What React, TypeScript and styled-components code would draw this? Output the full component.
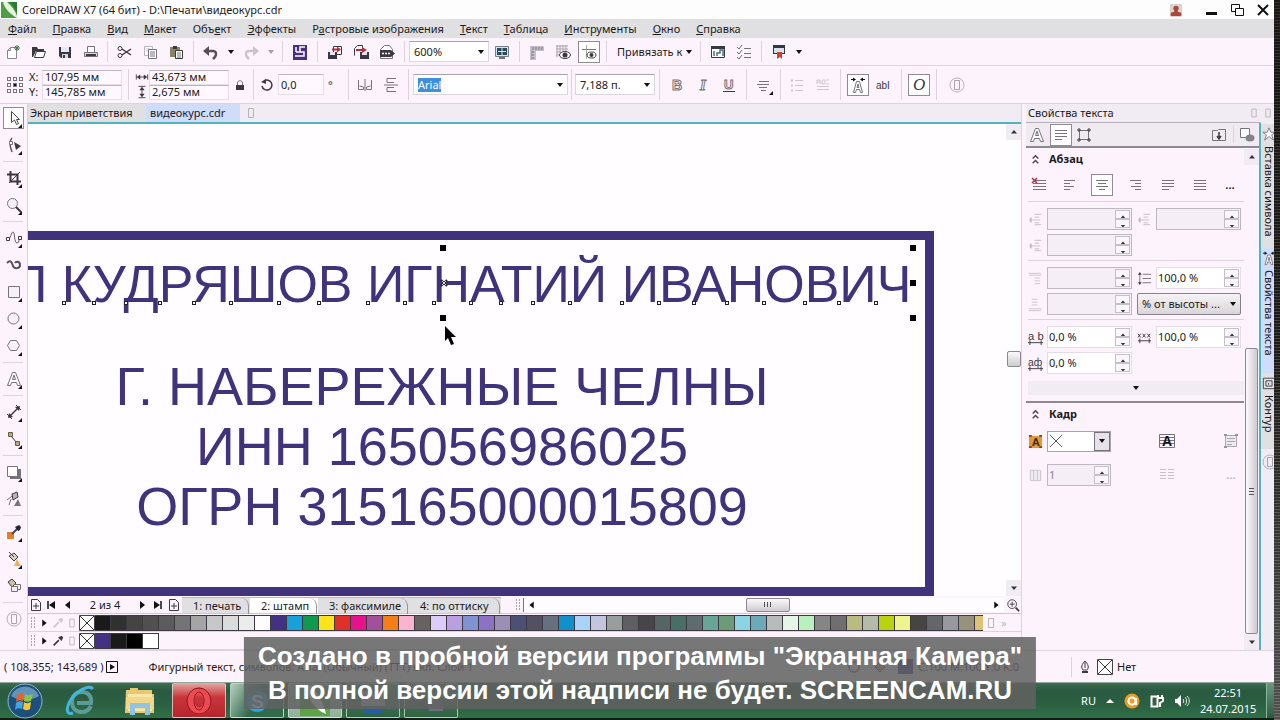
import React from "react";
import styled, { createGlobalStyle, css } from "styled-components";

const color = {
  ink: "#1d1a20",
  panel: "#fdf3fd",
  bar: "#f1ecf3",
  menu: "#e0dfe1",
  line: "#ddd3dd",
  teal: "#52b2bd",
  active: "#cfdcfa",
  stamp: "#41327c",
};

const GlobalStyle = createGlobalStyle`
  *, *::before, *::after { box-sizing: border-box; }
  body {
    margin: 0;
    font: 11px/16px "Noto Sans", "Open Sans", sans-serif;
    color: ${color.ink};
  }
  button, input, select { font: inherit; color: inherit; margin: 0; padding: 0; }
  button { background: none; border: 0; }
  svg { display: block; flex: none; overflow: visible; }
`;

/* ---------- icons ---------- */

const dark = "#3c383f";
const mid = "#77727b";
const s = (d: string, stroke = dark, width = 1, fill = "none") => (
  <path d={d} stroke={stroke} strokeWidth={width} fill={fill} />
);
const f = (d: string, fill = dark) => <path d={d} fill={fill} />;

const glyphs: Record<string, React.ReactNode> = {
  new: <>{s("M2.5 14.5v-8l3-3h6v11z", "#8b8590", 1, "#fff")}{s("M2.5 6.5h3v-3", "#8b8590")}{s("M12 1v6M9 4h6M10 2l4 4M14 2l-4 4", "#3d7a4a")}</>,
  open: <>{f("M1 3h5l1 2h6v2H5l-3 6H1z")}{s("M3.5 13.5l2-6h9l-2 6z", dark, 1, "#fff")}</>,
  save: <>{f("M2 3h12v11H4l-2-2z", "#3a3745")}{f("M4 3h8v5H4z", "#e8e6ee")}{f("M5 10h6v4H5z", "#d8d6de")}{f("M6 11h2v3H6z", "#3a3745")}</>,
  print: <>{s("M4.500 8V2.500h7V8", mid, 1, "#fff")}{f("M1 8h14v5H1z", "#dcd8de")}{s("M1.500 8.500h13v4h-13z", mid)}{f("M3 10h10v2H3z")}</>,
  cut: <>{s("M6 5l9 6M6 11l9-6", dark, 1.5)}<circle cx="4" cy="4.500" r="2" fill="none" stroke={dark} /><circle cx="4" cy="11.500" r="2" fill="none" stroke={dark} /></>,
  copy: <>{s("M2.500 2.500h8v9h-8z", "#b9b4bc", 1, "#fff")}{s("M4 5h5M4 7h5", "#c5c0c8")}{s("M6.500 5.500h8v9h-8z", mid, 1, "#fff")}{s("M8 8h5M8 10h5M8 12h5", mid)}</>,
  paste: <>{f("M2 3h10v10H2z", "#8a8465")}{f("M5 2h4v3H5z", dark)}{s("M7.500 6.500h7v8h-7z", dark, 1, "#fff")}{s("M9 9h4M9 11h4M9 13h4", mid)}</>,
  undo: <>{s("M4 7h6c3 0 4 3 2 6l-2 2", "#55505a", 2.5)}{f("M0 7l6-5v10z", "#55505a")}</>,
  redo: <>{s("M12 7H6c-3 0-4 3-2 6l2 2", "#c9c3cb", 2.5)}{f("M16 7l-6-5v10z", "#c9c3cb")}</>,
  connect: <>{f("M1 1h14v15H1z", "#4a2f7d")}{s("M13 3H8v5h4v4H3M4 3v5M4 8h4", "#fff", 1.5)}</>,
  import: <>{s("M6.500 9V2.500h8v8H10", dark)}{f("M1 8h9v7H1z", "#3a3745")}{f("M3 8h5v3H3z", "#e8e6ee")}{s("M5 5.500h6", "#b3313c", 2)}{f("M10 2.500l4 3-4 3z", "#b3313c")}</>,
  export: <>{s("M1.500 11.500V4.500l3-3h5V8", dark)}{f("M7 8h9v7H7z", "#3a3745")}{f("M9 8h5v3H9z", "#e8e6ee")}{s("M3 6h7", "#b3313c", 2)}{f("M9 3l5 3-5 3z", "#b3313c")}</>,
  publish: <>{s("M1.500 14.500v-9l4-4h5l3 4v9z", mid, 1, "#fff")}{f("M1 6h11l4 3.500-4 3.500H1z")}{s("M3 9.500h2M6 9.500h2M9 9.500h2", "#fff", 1.5)}</>,
  fullscreen: <>{s("M1.500 2.500h13v10h-13z", "#6f7f86", 1, "#cfe6ee")}{f("M3 4h10v7H3z", "#2c4a5b")}{s("M8 4v7M4 7.500h8", "#cfe6ee")}{f("M5 13h6v2H5z", mid)}</>,
  ruler: <>{f("M1 2h14v5H7v9H1z", "#c4c0ca")}{s("M4 3v3M7 3v3M10 3v3M13 3v3M2 8h3M2 11h3M2 14h3", mid)}</>,
  grid: <>{s("M1 2h12M1 5h12M1 8h5M1 11h3", "#aaa4ae", 1)}{s("M2 1v12M5 1v8M8 1v6M11 1v6", "#aaa4ae", 1)}<ellipse cx="10" cy="11" rx="5.500" ry="3.500" fill="#fff" stroke={dark} /><circle cx="10" cy="11" r="2.500" fill={dark} /></>,
  guides: <>{s("M1 5.500h14", mid)}{s("M5.500 1v14", "#aaa4ae")}<ellipse cx="10.500" cy="11" rx="4.500" ry="3" fill="#fff" stroke={dark} /><circle cx="10.500" cy="11" r="2" fill={dark} /></>,
  options: <>{s("M1.500 2.500h13v11h-13z", dark, 1, "#fff")}{f("M1 2h14v3H1z")}{s("M4 12V7M7 12V9h3V6h3v6", "#4d6d8a", 1.500)}</>,
  checklist: <>{s("M1 3l2 2 3-4M1 8l2 2 3-4M1 13l2 2 3-4", "#5b7a52")}{s("M8 4.500h7M8 9.500h7M8 13.500h7", mid)}</>,
  launch: <>{f("M2 1h12v9H2z", "#2e3746")}{f("M3 4h10v5H3z", "#d5e0e8")}{f("M6 8h5v7l-2-2-3 2z", "#d0402d")}</>,
  origin: <>{[1, 7, 13].map((x) => [1, 7, 13].map((y) => <rect key={x + "-" + y} x={x - 0.5} y={y - 0.5} width="3" height="3" fill={x === 7 && y === 7 ? "#111" : "#fff"} stroke="#77727b" />))}</>,
  width: <>{s("M1.500 5v6M14.500 5v6M3 8h10")}{f("M2 8l4-3v6zM14 8l-4-3v6z")}</>,
  height: <>{s("M4 1.500h8M4 14.500h8M8 3v10")}{f("M8 2l3 4H5zM8 14l3-4H5z")}</>,
  lock: <>{s("M5.500 8V6c0-3 5-3 5 0v2", mid)}{f("M4 8h8v5H4z")}</>,
  rotate: <>{s("M5 4a5 5 0 1 1-2 5", dark, 1.500)}{f("M2 5l5-3v5z")}</>,
  mirrorH: <>{s("M1.500 3v9.500h5V10l-4-1M14.500 3v9.500h-5V10l4-1", mid)}{s("M8 2v12", mid)}</>,
  mirrorV: <>{s("M13 1.500H4v4h7M13 14.500H4v-4h7", mid)}{s("M1 8h14", mid)}</>,
  alignMenu: <>{s("M3 4.500h10M1 7.500h12M3 10.500h8M5 13.500h5", mid)}</>,
  bullets: <>{s("M6 3.500h8M6 8.500h8M6 13.500h8", "#cdc6cf")}{s("M2 3.500h2M2 8.500h2M2 13.500h2", "#cdc6cf", 2)}</>,
  dropCap: <>{s("M2 7V3h3v4M2 5h3M7 3h3v4H7zM11 3h3M11 7h3M2 9.500h12M2 12.500h12", "#cdc6cf")}</>,
  holder: <><circle cx="8" cy="8" r="7" fill="none" stroke="#b5afb8" />{s("M5.500 3.500h5v9h-5z", "#a9a3ab")}</>,
  slot: s("M5.500 3.500h5v9h-5z", "#b9b2bb"),
  pick: <>{s("M5.500 1.500v11l3-2.500 2 4.500 2-1-2-4h3z", "#4a454e", 1, "#fff")}</>,
  shape: <>{s("M6 1C3 4 4 10 6 15", "#5d5861", 1.500)}{s("M3.500 4.500h3v3h-3z", mid, 1, "#fff")}{f("M8 5l7 4-5 4z")}</>,
  crop: <>{s("M4.500 1v10.500H15M1 4.500h10.500V15", dark, 2)}{s("M3 13L14 2")}</>,
  zoom: <><circle cx="6.500" cy="6.500" r="5" fill="#f5eff6" stroke={mid} />{s("M10 10l5 5", dark, 2)}</>,
  freehand: <>{s("M2 9c3 0 3-7 5-7s1 11 4 11 1-5 4-5", "#5d5861")}{s("M.500 7.500h3v3h-3zM12.500 6.500h3v3h-3z", dark, 1, "#fff")}</>,
  artistic: <>{s("M1 6c4-4 5 0 6 3s7 3 7-1-4-4-5-2", "#55505a", 2)}</>,
  rect: <>{s("M2.500 2.500h11v11h-11z", mid, 1, "#f5f1f6")}</>,
  ellipse: <circle cx="7.500" cy="7.500" r="5.500" fill="#f5f1f6" stroke={mid} />,
  polygon: <>{s("M1.500 7.500l3-5h6l3 5-3 5h-6z", mid, 1, "#f5f1f6")}</>,
  text: <>{s("M1.500 14.500l5-13h3l5 13h-3l-1-3h-5l-1 3zM6.500 8.500h3L8 4z", mid, 1, "#fff")}</>,
  dimension: <>{s("M3 13L13 3", dark, 1.500)}{s("M1 10l5 5M10 1l5 5")}{f("M2 14l1-5 4 4zM14 2l-1 5-4-4z")}</>,
  connector: <>{s("M5 5l6 7")}{s("M2.500 1.500h4v4h-4zM9.500 10.500h4v4h-4z", "#6b5d44", 1, "#b8a983")}</>,
  shadow: <>{f("M4 5h11v10H4z", "#77727b")}{s("M1.500 2.500h10v10h-10z", mid, 1, "#fff")}</>,
  transparency: <>{s("M1 9l9-7M5 8l-2 6", mid)}{s("M6 3l5-2 1 5-5 3z", dark, 1, "#b9b3bd")}{f("M12 8l3 7H8z", "#77727b")}</>,
  eyedropper: <>{f("M1 8h7v7H1z", "#e0822a")}{s("M6 10l6-6", "#46465e", 2)}{f("M9 3l2-1 2-1 2 2-1 3-2 1z", "#25243a")}</>,
  fill: <>{s("M3 5l5-3 4 4-4 4z", dark, 1, "#d9d2c4")}{s("M3 1l5 5")}{f("M11 8l4 7H8z", "#eab251")}</>,
  smartFill: <>{s("M2 4l4-3 4 4-4 4z", dark, 1, "#c9c2a4")}{s("M5.500 8.500h6v5h-6zM8.500 6.500h6v5h-3", mid, 1, "#f1edf2")}</>,
  frame: <>{s("M3.500 3.500h9v9h-9z", mid)}{s("M1 3h4M3 1v4M11 3h4M13 1v4M1 13h4M3 11v4M11 13h4M13 11v4", dark)}</>,
  paragraph: s("M2 3.500h12M2 6.500h12M2 9.500h12M2 12.500h7", mid),
  dock: <>{s("M1.500 3.500h5l1-1h7v11h-13z", mid)}{s("M8 5v6M6 9l2 3 2-3", dark, 1.500)}</>,
  overlap: <>{s("M1.500 1.500h9v9h-9z", mid, 1, "#fff")}<ellipse cx="11" cy="11" rx="4.500" ry="3.500" fill="#858089" /></>,
  chevrons: s("M5 7l3-3 3 3M5 12l3-3 3 3", "#4a454e", 1.500),
  noAlign: <>{s("M4 3.500h11M2 6.500h13M2 9.500h13M2 12.500h13", mid)}{s("M1 1l5 5M6 1l-5 5", "#b93342", 1.500)}</>,
  left: s("M2 3.500h11M2 6.500h6M2 9.500h10M2 12.500h6", mid),
  center: s("M2 3.500h12M4 6.500h8M2 9.500h12M5 12.500h6", mid),
  right: s("M3 3.500h11M8 6.500h6M4 9.500h10M8 12.500h6", mid),
  justify: s("M2 3.500h12M2 6.500h12M2 9.500h12M2 12.500h7", mid),
  force: s("M2 3.500h12M2 6.500h12M2 9.500h12M2 12.500h12", mid),
  indent: <>{s("M7 2.500h7M7 5.500h5M1 8.500h12M7 11.500h5M7 13.500h7", "#c5bec8")}{s("M3 6v5", "#c5bec8", 2)}</>,
  space: <>{s("M1 2.500h13M1 4.500h13M7 7.500h6M7 10.500h6M7 13.500h6", "#cbc4cd")}</>,
  spaceAfter: <>{s("M4 2.500h6M4 5.500h6M4 8.500h6M1 12.500h13M1 14.500h13", "#cbc4cd")}</>,
  lead: <>{s("M3 3v10M6 3.500h9M6 8h9M6 12.500h9", mid)}{f("M3 1l2 3H1zM3 15l2-3H1z", dark)}</>,
  ab: <><text x="0" y="11" fontFamily="Liberation Sans" fontSize="12" fill={dark}>a b</text>{s("M0 13.500h16M2 11v5M14 11v5")}</>,
  abLang: <><text x="0" y="11" fontFamily="Liberation Sans" fontSize="11" fill={dark}>aф</text>{s("M0 13.500h16M2 11v5M14 11v5")}</>,
  xxx: <>{s("M1 4l3 4M4 4L1 8M6 4l3 4M9 4L6 8M11 4l3 4M14 4l-3 4M1 11.500h14M3 9v5M13 9v5")}</>,
  frameFill: <>{f("M1 2h14v13H1z", "#dd9a37")}{s("M1 2h3M12 2h3M1 14h3M12 14h3", "#6b4a1c", 2)}<text x="4" y="13" fontFamily="Liberation Sans" fontWeight="700" fontSize="12" fill="#3b2b18">A</text></>,
  frameA: <>{s("M.500 1.500h15v13H.500zM1 4.500h14M1 7.500h14M1 10.500h14", mid, 1)}<text x="3" y="13" fontFamily="Liberation Sans" fontWeight="700" fontSize="14" fill="#111">A</text></>,
  frameText: <>{s("M2.500 2.500h11v11h-11zM4 5.500h8M4 8.500h8M4 11.500h5", "#aaa4ad", 1, "#eee9ef")}{s("M1 2h3M12 2h3M1 14h3", "#99939c", 2)}</>,
  columns: <>{s("M2.500 2.500h11v11h-11zM6 3v10M10 3v10", "#c8c1ca", 1, "#f1ebf2")}</>,
  columnText: s("M1 2.500h6M1 5.500h6M1 8.500h6M1 11.500h6M9 2.500h6M9 5.500h6M9 8.500h6M9 11.500h6", "#c8c1ca"),
  star: <>{s("M8 1l2 5h5l-4 3 2 6-5-4-5 4 2-6-4-3h5z", mid, 1, "#fff")}</>,
  outline: <>{s("M1.500 2.500h13v12h-13zM4.500 5.500h7v6h-7zM7.500 8v2", dark)}</>,
  addPage: <>{s("M3.500 2.500h6l3 3v8h-9zM8 6v6M5 9h6", dark)}</>,
  first: <>{s("M4 4v8", "#111", 1.500)}{f("M11 4v8L5 8z", "#111")}</>,
  prev: f("M10 4v8L5 8z", "#111"),
  next: f("M6 4v8l5-4z", "#111"),
  last: <>{s("M11 4v8", "#111", 1.500)}{f("M4 4v8l6-4z", "#111")}</>,
  up: f("M5 9.500h6L8 6z", "#333"),
  down: f("M5 6.500h6L8 10z", "#333"),
  zoomFit: <><circle cx="7" cy="7" r="5" fill="none" stroke={dark} />{s("M11 11l4 4", dark, 2)}{s("M7 4v6M4 7h6")}</>,
  dropperOff: <>{s("M3 13l6-6", "#cdc7cf", 2)}{f("M8 4l4-2 2 2-2 4z", "#cdc7cf")}</>,
  dropper: <>{s("M3 13l6-6", dark, 2)}{f("M8 4l4-2 2 2-2 4z")}</>,
  nib: <>{s("M8 2C3 7 5 10 6 11h4c1-1 3-4-2-9zM8 3v6", dark)}{f("M5 12h6v2H5z")}</>,
  fillTool: <>{s("M3 8l5-5 5 5-5 5z", dark, 1, "#c9a86a")}</>,
  disc: <circle cx="8" cy="8" r="5" fill="none" stroke={mid} strokeWidth="2" />,
  runBox: <>{s("M2.500 2.500h11v11h-11z", "#111", 1)}{f("M6 5v6l5-3z", "#111")}</>,
  none: <>{s("M.500.500h15v15H.500z", "#444", 1, "#fff")}{s("M1 1l14 14M15 1L1 15", "#333")}</>,
  cross: s("M1 1l14 14M15 1L1 15", "#444"),
  person: <>{f("M1 1h14v14H1z", "#d9d3cf")}<circle cx="8" cy="6" r="3" fill="#a8483a" />{f("M6 8h4v2l4 1v4H2v-4l4-1z", "#a8483a")}</>,
  minimize: f("M3 10h11v3H3z", "#111"),
  restore: <>{s("M2.500 2.500h8v7h-8z", "#111", 1)}{s("M6.500 6.500h8v7h-8z", "#111", 1, "#fff")}</>,
  close: s("M3 3l10 10M13 3L3 13", "#111", 2),
  boldLetter: <text x="3" y="13" fontFamily="Liberation Sans" fontWeight="700" fontSize="14" fill="#fff" stroke="#77727b">B</text>,
  italicLetter: <text x="5" y="13" fontFamily="Liberation Serif" fontStyle="italic" fontWeight="700" fontSize="15" fill="#fff" stroke="#77727b">I</text>,
  underLetter: <><text x="3" y="12" fontFamily="Liberation Sans" fontWeight="700" fontSize="13" fill="#fff" stroke="#77727b">U</text>{s("M2 14.500h12", dark)}</>,
  textMode: <>{s("M3.500 15.500l3-11h3l3 11h-2l-1-3h-3l-1 3zM7 10.500h2L8 7z", mid, 1, "#fff")}{s("M1 2.500h3M12 2.500h3", "#111")}{f("M3 0.500l3 2-3 2zM13 0.500l-3 2 3 2z", "#111")}</>,
  editText: <text x="0" y="12" fontFamily="Liberation Sans" fontSize="10" fill={dark}>abI</text>,
  openType: <text x="2" y="13" fontFamily="Liberation Serif" fontStyle="italic" fontSize="17" fill={dark}>O</text>,
};

const Icon = ({ name, size = 16 }: { name: string; size?: number }) => (
  <svg width={size} height={size} viewBox="0 0 16 16" aria-hidden="true">{glyphs[name]}</svg>
);

const Logo = () => (
  <svg width="16" height="16" viewBox="0 0 16 16" aria-hidden="true">
    <path d="M0 0h16v16H0z" fill="#4f9d45" />
    <path d="M2 0h4c4 4 8 8 10 14v2C9 12 4 7 2 0z" fill="#e6f4df" />
    <path d="M8 0c4 3 6 7 8 12V0z" fill="#2c7a37" />
  </svg>
);

/* ---------- shared parts ---------- */

const Screen = styled.div`
  position: relative;
  display: flex;
  min-height: 100vh;
  overflow: hidden;
`;

const Desktop = styled.div`
  flex: 1;
  min-width: 0;
  display: flex;
  flex-direction: column;
  background: ${color.panel};
`;

const Wallpaper = styled.div`
  flex: 0 0 6px;
  background:
    linear-gradient(rgba(20, 20, 18, 0.7), rgba(20, 20, 18, 0.5) 50%, rgba(110, 110, 110, 0.6)),
    repeating-linear-gradient(#25231f 0 2px, #7a7770 2px 3px);
`;

const TitleBar = styled.header`
  display: flex;
  align-items: center;
  gap: 5px;
  height: 19px;
  padding-left: 1px;
  background: #fefdfe;
`;

const WindowButtons = styled.div`
  display: flex;
  gap: 10px;
  margin-left: auto;
  padding-right: 3px;
  > :first-child { margin-right: 10px; }
`;

const MenuBar = styled.nav`
  display: flex;
  align-items: center;
  gap: 16px;
  height: 19px;
  padding-left: 8px;
  background: ${color.menu};
`;

const MenuItem = styled.button`
  white-space: nowrap;
  line-height: 18px;
`;

const Toolbar = styled.div<{ $tall?: boolean }>`
  display: flex;
  align-items: center;
  height: ${(p) => (p.$tall ? 38 : 28)}px;
  border-bottom: 1px solid ${color.line};
`;

const Divider = styled.span<{ $w?: number }>`
  flex: none;
  align-self: stretch;
  width: 1px;
  margin: 3px ${(p) => p.$w ?? 4}px;
  background: ${color.line};
`;

const ToolButton = styled.button<{ $on?: boolean; $flyout?: boolean; $w?: number }>`
  position: relative;
  flex: none;
  display: grid;
  place-items: center;
  width: ${(p) => p.$w ?? 26}px;
  height: 26px;
  ${(p) => p.$on && css`
    &::before {
      content: "";
      position: absolute;
      inset: 2px;
      border: 1px solid #8f8a93;
      background: #fff;
    }
    svg { position: relative; }
  `}
  ${(p) => p.$flyout && css`
    &::after {
      content: "";
      position: absolute;
      right: 4px;
      bottom: 3px;
      border: 2px solid;
      border-color: transparent #111 #111 transparent;
    }
  `}
`;

const Caret = styled.button<{ $w?: number; $dim?: boolean }>`
  flex: none;
  display: grid;
  place-items: center;
  width: ${(p) => p.$w ?? 14}px;
  height: 18px;
  &::before {
    content: "";
    border: 3px solid transparent;
    border-top: 4px solid ${(p) => (p.$dim ? "#a59fa7" : "#111")};
    border-bottom: 0;
  }
`;

const Combo = styled.div<{ $w: number }>`
  flex: none;
  display: flex;
  align-items: center;
  justify-content: space-between;
  width: ${(p) => p.$w}px;
  height: 21px;
  padding-left: 4px;
  border: 1px solid #ddd6df;
  border-top-color: #aaa3ad;
  background: #fff;
`;

const ComboInput = styled.input<{ $marked?: boolean }>`
  width: ${(p) => (p.$marked ? 23 : 48)}px;
  height: 14px;
  border: 0;
  background: ${(p) => (p.$marked ? "#3f8fdf" : "transparent")};
  color: ${(p) => (p.$marked ? "#fff" : "inherit")};
`;

const SnapButton = styled.button`
  padding: 0 0 0 6px;
  white-space: nowrap;
`;

const FieldStack = styled.div`
  display: grid;
`;

const PairLabel = styled.label`
  display: flex;
  align-items: center;
  height: 15px;
  > span { width: 13px; }
`;

const PlainInput = styled.input<{ $w?: number }>`
  width: ${(p) => p.$w ?? 80}px;
  height: 15px;
  padding-left: 2px;
  border: 1px solid #e6dde7;
  border-top-color: #bdb5bf;
  background: #fff9ff;
`;

const AngleInput = styled(PlainInput)`
  height: 21px;
`;

const Degree = styled.span`
  width: 21px;
  padding-left: 4px;
`;

/* ---------- work area ---------- */

const Work = styled.div`
  flex: 1;
  display: flex;
  min-height: 0;
`;

const Toolbox = styled.aside`
  flex: 0 0 28px;
  display: flex;
  flex-direction: column;
  gap: 1px;
  padding: 1px 0 0 1px;
  border-right: 1px solid #d9cfdb;
`;

const ToolboxRule = styled.span`
  flex: none;
  height: 5px;
  margin: 0 4px 0 2px;
  border-bottom: 2px solid ${color.panel};
  background: linear-gradient(transparent 2px, ${color.line} 2px);
`;

const Center = styled.main`
  flex: 1;
  min-width: 0;
  display: flex;
  flex-direction: column;
`;

const DocTabs = styled.div`
  flex: none;
  display: flex;
  align-items: center;
  height: 20px;
  border-bottom: 2px solid ${color.teal};
  background: ${color.bar};
`;

const DocTab = styled.button<{ $active?: boolean }>`
  align-self: stretch;
  width: ${(p) => (p.$active ? 94 : 118)}px;
  padding-left: ${(p) => (p.$active ? 4 : 2)}px;
  text-align: left;
  background: ${(p) => (p.$active ? color.active : color.menu)};
`;

const Stage = styled.div`
  flex: 1;
  display: flex;
  min-height: 0;
`;

const Canvas = styled.div`
  position: relative;
  flex: 1;
  overflow: hidden;
  background: #fffdff;
`;

const Stamp = styled.div`
  position: absolute;
  left: -78px;
  top: 107px;
  width: 984px;
  height: 365px;
  border: 9px solid ${color.stamp};
  text-align: center;
  white-space: nowrap;
  color: ${color.stamp};
  font: 54px/60px "Liberation Sans", Arial, sans-serif;
`;

const StampLine = styled.p`
  margin: 0;
`;

const StampHead = styled(StampLine)`
  padding: 14px 0 42px;
  font-size: 52px;
`;

const Handle = styled.i`
  position: absolute;
  width: 6px;
  height: 6px;
  background: #000;
`;

const Node = styled.i`
  position: absolute;
  top: 177px;
  width: 4px;
  height: 4px;
  border: 1px solid #222;
  background: #fff;
`;

const Mark = styled.svg`
  position: absolute;
`;

const VScroll = styled.div<{ $w?: number }>`
  flex: 0 0 ${(p) => p.$w ?? 15}px;
  display: flex;
  flex-direction: column;
  align-items: center;
  background: ${(p) => (p.$w ? color.panel : "#fffdff")};
`;

const ScrollButton = styled.button`
  flex: none;
  display: grid;
  place-items: center;
  width: 15px;
  height: 16px;
  background: ${color.bar};
`;

const Space = styled.span<{ $grow: number }>`
  flex: ${(p) => p.$grow} 1 0;
`;

const Thumb = styled.button<{ $w: number; $h?: number; $grow?: number }>`
  flex: ${(p) => p.$grow ?? 0} 0 auto;
  display: grid;
  place-items: center;
  width: ${(p) => p.$w}px;
  height: ${(p) => (p.$h ? p.$h + "px" : "auto")};
  border: 1px solid #8d8890;
  border-radius: 2px;
  background: linear-gradient(${(p) => (p.$grow ? "90deg" : "180deg")}, #fbf9fb, #cfcbd0);
`;

const Grip = styled.span<{ $turn?: boolean }>`
  width: ${(p) => (p.$turn ? 5 : 7)}px;
  height: ${(p) => (p.$turn ? 7 : 5)}px;
  background: repeating-linear-gradient(${(p) => (p.$turn ? "180deg" : "90deg")}, #555 0 1px, transparent 1px 3px);
`;

const PageBar = styled.div`
  flex: none;
  display: flex;
  align-items: center;
  height: 18px;
  border-bottom: 1px solid #cfc6d1;
`;

const PageButton = styled.button<{ $w?: number }>`
  flex: none;
  display: grid;
  place-items: center;
  width: ${(p) => p.$w ?? 16}px;
`;

const PageCount = styled.span`
  width: 58px;
  text-align: center;
`;

const PageTab = styled.button<{ $active?: boolean; $w: number }>`
  flex: none;
  position: relative;
  width: ${(p) => p.$w}px;
  height: 16px;
  padding-left: 11px;
  text-align: left;
  line-height: 16px;
  white-space: nowrap;
  border-top: 1px solid #bdb6bf;
  background: ${(p) => (p.$active ? "#fff" : color.menu)};
  &::after {
    content: "";
    position: absolute;
    right: 1px;
    top: 0;
    width: 8px;
    height: 16px;
    border-right: 1px solid #98929a;
    border-top-right-radius: 8px;
  }
`;

const HScroll = styled.div`
  flex: 1;
  display: flex;
  align-items: center;
  background: #fffdff;
  border-left: 1px solid #77717a;
`;

const DragDots = styled.span`
  flex: none;
  width: 4px;
  height: 12px;
  margin: 0 2px 0 3px;
  background: repeating-linear-gradient(transparent 0 2px, ${color.panel} 2px 3px),
    repeating-linear-gradient(90deg, #a9a2ab 0 1px, transparent 1px 3px);
`;

const SplitDots = styled(DragDots)`
  margin: 0 3px 0 15px;
`;

const PaletteRow = styled.div`
  flex: none;
  display: flex;
  align-items: center;
  height: 18px;
  border-bottom: 1px solid ${color.line};
`;

const PaletteTools = styled.div`
  flex: 0 0 50px;
  display: flex;
  align-items: center;
  margin-right: auto;
`;

const Swatches = styled.div<{ $grow?: boolean }>`
  flex: ${(p) => (p.$grow ? "1 1 0" : "none")};
  display: flex;
  overflow: hidden;
`;

const ShortSwatches = styled(Swatches)`
  margin-right: auto;
`;

const Swatch = styled.button<{ $c: string }>`
  flex: 0 0 16px;
  height: 16px;
  background: ${(p) => p.$c};
  border: 1px solid #3c3a40;
  border-left-width: 0;
`;

const EmptySwatch = styled.button`
  flex: 0 0 16px;
`;

const PaletteEnd = styled.div`
  flex: 0 0 38px;
  display: flex;
  gap: 2px;
  color: #bbb3bd;
`;

/* ---------- docker ---------- */

const Docker = styled.section`
  flex: 0 0 240px;
  min-width: 0;
  display: flex;
  flex-direction: column;
  padding-left: 4px;
  border-left: 1px solid ${color.line};
`;

const DockerTitle = styled.h2`
  flex: none;
  display: flex;
  align-items: center;
  justify-content: space-between;
  height: 19px;
  margin: 0;
  padding-left: 2px;
  font: inherit;
  font-weight: 400;
  background: ${color.bar};
  border-bottom: 1px solid #b8b0ba;
`;

const DockerBody = styled.div`
  flex: 1;
  display: flex;
  min-height: 0;
  border-right: 2px solid ${color.teal};
`;

const DockerContent = styled.div`
  flex: 1;
  min-width: 0;
`;

const DockerTabs = styled.div`
  position: relative;
  display: flex;
  align-items: center;
  height: 25px;
  margin-right: -15px;
  border-bottom: 2px solid #8e8890;
  background: #efebf0;
  > :nth-child(4) { margin-left: auto; }
`;

const Section = styled.section`
  border-bottom: 2px solid #8e8890;
  padding: 1px 0 0 2px;
  &:last-child { border-bottom: 0; }
`;

const SectionTitle = styled.h3`
  display: flex;
  align-items: center;
  gap: 6px;
  height: 20px;
  margin: 0;
  font-size: 11px;
  font-weight: 700;
`;

const AlignRow = styled.div`
  display: flex;
  justify-content: space-between;
  padding: 3px 4px 3px 0;
`;

const Group = styled.div`
  display: grid;
  gap: 4px;
  padding: 6px 3px 4px 0;
  border-top: 1px solid ${color.line};
`;

const Row = styled.div`
  display: grid;
  grid-template-columns: 104px minmax(0, 1fr);
  gap: 5px;
  align-items: center;
  height: 22px;
`;

const Field = styled.label`
  display: flex;
  align-items: center;
  gap: 4px;
  min-width: 0;
`;

const SpinBox = styled.span<{ $off?: boolean; $w?: number }>`
  flex: ${(p) => (p.$w ? `0 0 ${p.$w}px` : "1")};
  display: flex;
  min-width: 0;
  height: 22px;
  padding: 1px;
  border: 1px solid ${(p) => (p.$off ? "#bfb7c1" : "#e3dbe5")};
  background: ${(p) => (p.$off ? "#f6eef6" : "#fff")};
  color: ${(p) => (p.$off ? "#8a848c" : "inherit")};
  input {
    flex: 1;
    width: 0;
    min-width: 0;
    border: 0;
    background: transparent;
  }
`;

const Arrows = styled.span`
  flex: none;
  display: grid;
  width: 15px;
  button {
    display: grid;
    place-items: center;
    height: 9px;
    border: 1px solid #c6bfc8;
    background: #fbf6fb;
    overflow: hidden;
  }
`;

const UnitBox = styled.span`
  display: flex;
  align-items: center;
  height: 22px;
  padding-left: 4px;
  border: 1px solid #85808a;
  border-radius: 2px;
  background: linear-gradient(#f6f3f6, #d9d5da);
  select {
    flex: 1;
    min-width: 0;
    appearance: none;
    border: 0;
    background: transparent;
  }
`;

const More = styled.button`
  display: flex;
  align-items: center;
  justify-content: center;
  width: 100%;
  height: 14px;
  margin: 3px 0 6px;
  background: ${color.bar};
`;

const Dots = styled.button<{ $off?: boolean }>`
  width: 20px;
  font-weight: 700;
  color: ${(p) => (p.$off ? "#bfb8c1" : "inherit")};
`;

const FrameRow = styled.div`
  display: grid;
  grid-template-columns: 84px minmax(0, 1fr) 20px;
  align-items: center;
  height: 34px;
  padding-right: 3px;
  > :nth-child(2) { justify-self: center; }
`;

const FillBox = styled.span`
  flex: 0 0 64px;
  display: flex;
  align-items: center;
  justify-content: space-between;
  height: 21px;
  padding-left: 1px;
  border: 1px solid #aaa3ad;
  background: #fff;
`;

const DropButton = styled(Caret)`
  height: 19px;
  border: 1px solid #77717a;
  background: #e6e2e7;
`;

const SideTabs = styled.nav`
  flex: 0 0 13px;
  display: flex;
  flex-direction: column;
  background: ${color.bar};
  overflow: hidden;
`;

const SideHead = styled.div`
  flex: 0 0 20px;
  padding-top: 2px;
`;

const SideTab = styled.button<{ $active?: boolean; $h: number }>`
  flex: 0 0 ${(p) => p.$h}px;
  display: flex;
  align-items: center;
  gap: 5px;
  width: 16px;
  padding-top: 3px;
  writing-mode: vertical-rl;
  white-space: nowrap;
  line-height: 16px;
  background: ${(p) => (p.$active ? color.active : color.menu)};
`;

/* ---------- status bar, taskbar, notice ---------- */

const StatusBar = styled.footer`
  flex: none;
  display: flex;
  align-items: center;
  height: 32px;
  padding-left: 4px;
  border-top: 1px solid ${color.line};
  white-space: nowrap;
`;

const StatusText = styled.span<{ $w: number }>`
  flex: 0 0 ${(p) => p.$w}px;
`;

const StatusRight = styled.div`
  display: flex;
  align-items: center;
  gap: 4px;
  width: 203px;
  height: 20px;
  padding-left: 5px;
  border-left: 1px solid ${color.line};
`;

const FillStatus = styled.div`
  display: flex;
  align-items: center;
  gap: 10px;
  margin-left: auto;
  padding-right: 52px;
`;

const FillChip = styled.span`
  display: flex;
  gap: 5px;
  &::before {
    content: "";
    width: 15px;
    height: 15px;
    background: #2d2580;
  }
`;

const Taskbar = styled.div`
  flex: none;
  display: flex;
  align-items: center;
  height: 38px;
  gap: 4px;
  border-top: 1px solid #8fa897;
  border-bottom: 2px solid #0f1d16;
  background: linear-gradient(#3d6e52, #2a5a41 20%, #2b6041 60%, #2f7048);
  color: #fff;
`;

const TaskButton = styled.button<{ $tone?: string; $w?: number }>`
  flex: none;
  display: grid;
  place-items: center;
  width: ${(p) => p.$w ?? 54}px;
  height: 35px;
  ${(p) => p.$tone && css`
    border: 1px solid rgba(225, 240, 230, 0.7);
    border-radius: 2px;
    background: ${p.$tone};
  `}
`;

const Tray = styled.div`
  display: flex;
  align-items: center;
  gap: 10px;
  margin-left: auto;
`;

const Clock = styled.time`
  width: 56px;
  margin-right: 6px;
  text-align: center;
  white-space: nowrap;
`;

const ShowDesktop = styled.button`
  width: 8px;
  height: 35px;
  border-left: 1px solid #8fb39c;
  background: linear-gradient(#6c9580, #2c5a41);
`;

const Notice = styled.p`
  position: absolute;
  left: 50%;
  bottom: 11px;
  transform: translateX(-50%);
  margin: 0;
  padding: 2px 14px;
  background: rgba(98, 98, 98, 0.86);
  color: #fff;
  text-align: center;
  white-space: nowrap;
  font: 700 26px/34px "Liberation Sans", Arial, sans-serif;
`;

/* ---------- data ---------- */

const menus: [string, string, string][] = [
  ["", "Ф", "айл"], ["", "П", "равка"], ["", "В", "ид"], ["", "М", "акет"], ["Объ", "е", "кт"], ["", "Э", "ффекты"],
  ["Р", "а", "стровые изображения"], ["", "Т", "екст"], ["", "Т", "аблица"], ["", "И", "нструменты"], ["", "О", "кно"], ["", "С", "правка"],
];

const toolbox = [
  ["pick", "shape"], ["crop", "zoom"], ["freehand", "artistic", "rect", "ellipse", "polygon"], ["text"],
  ["dimension", "connector"], ["shadow", "transparency"], ["eyedropper", "fill", "smartFill"], ["holder"],
];
const withoutFlyout = ["artistic", "transparency", "smartFill", "holder"];

const palette = (
  "1a1a1a 303030 444444 505050 5c5c5c 747474 a4a6a5 c6c8c7 dadcdb ececec fdfdfd 433284 18a0d8 0f9a50 fde31b e0302a e6128c a2509b f57f17 " +
  "fcb3cf 66625f dcccf9 b9a0e0 7f93d2 8c72c4 9b8fb5 4c5074 55505f 67707f 1190cc aad3fb c1c6dc 989e9c 5f5f61 464648 566462 476f66 5f6b6f " +
  "67a597 6b9b77 8bd5e2 6ea9b7 b9bbbb e6f5e6 b9f0bd 858585 6f6f6f b9bb82 b3bba9 b9d30e f0f48f 464641 656668 98999e 96927b dcc377"
).split(" ");

const handles = [[412, 121], [882, 121], [882, 156], [412, 191], [882, 191]];
const nodes = [34, 64, 96, 130, 164, 201, 249, 289, 338, 375, 404, 441, 471, 503, 540, 592, 629, 664, 697, 734, 775, 809, 846];

/* ---------- composite parts ---------- */

const Tool = ({ name, ...rest }: { name: string; $on?: boolean; $flyout?: boolean; $w?: number }) => (
  <ToolButton aria-label={name} {...rest}><Icon name={name} /></ToolButton>
);

const Spin = ({ icon, label, value = "", off, w }: { icon: string; label: string; value?: string; off?: boolean; w?: number }) => (
  <Field>
    <Icon name={icon} size={15} />
    <SpinBox $off={off} $w={w}>
      <input aria-label={label} defaultValue={value} disabled={off} />
      <Arrows>
        <button aria-label="Больше"><Icon name="up" size={12} /></button>
        <button aria-label="Меньше"><Icon name="down" size={12} /></button>
      </Arrows>
    </SpinBox>
  </Field>
);

const PaletteBar = ({ colors, picker, grow }: { colors: string[]; picker: string; grow?: boolean }) => {
  const List = grow ? Swatches : ShortSwatches;
  return (
    <PaletteRow>
      <PaletteTools>
        <DragDots />
        <Icon name="next" size={14} />
        <Icon name={picker} size={14} />
        <Icon name="slot" size={14} />
      </PaletteTools>
      <List $grow={grow}>
        <EmptySwatch aria-label="Без цвета"><Icon name="none" /></EmptySwatch>
        {colors.map((c) => <Swatch key={c} $c={"#" + c} aria-label={"#" + c} />)}
      </List>
      {grow ? <PaletteEnd><Icon name="slot" />»</PaletteEnd> : <Space $grow={1} />}
    </PaletteRow>
  );
};

const TextDocker = () => (
  <Docker>
    <DockerTitle>Свойства текста<Icon name="slot" size={14} /></DockerTitle>
    <DockerBody>
      <DockerContent>
        <DockerTabs>
          <Tool name="text" $w={22} />
          <Tool name="paragraph" $on />
          <Tool name="frame" $w={20} />
          <Tool name="dock" />
          <Divider $w={1} />
          <Tool name="overlap" $w={24} />
        </DockerTabs>
        <Section>
          <SectionTitle><Icon name="chevrons" size={15} />Абзац</SectionTitle>
          <AlignRow>
            <Tool name="noAlign" $w={22} />
            <Tool name="left" />
            <Tool name="center" $on />
            <Tool name="right" />
            <Tool name="justify" />
            <Tool name="force" />
            <Dots aria-label="Параметры абзаца">...</Dots>
          </AlignRow>
          <Group>
            <Row><Spin icon="indent" label="Отступ слева" off /><Spin icon="indent" label="Первая строка" off /></Row>
            <Row><Spin icon="indent" label="Отступ справа" off /></Row>
          </Group>
          <Group>
            <Row><Spin icon="space" label="Перед абзацем" off /><Spin icon="lead" label="Интервал" value="100,0 %" /></Row>
            <Row>
              <Spin icon="spaceAfter" label="После абзаца" off />
              <UnitBox>
                <select aria-label="Единицы интервала"><option>% от высоты ...</option></select>
                <Caret as="span" />
              </UnitBox>
            </Row>
          </Group>
          <Group>
            <Row><Spin icon="ab" label="Между символами" value="0,0 %" /><Spin icon="xxx" label="Между словами" value="100,0 %" /></Row>
            <Row><Spin icon="abLang" label="Между языками" value="0,0 %" /></Row>
          </Group>
          <More aria-label="Дополнительно"><Caret as="span" /></More>
        </Section>
        <Section>
          <SectionTitle><Icon name="chevrons" size={15} />Кадр</SectionTitle>
          <FrameRow>
            <Field as="div">
              <Icon name="frameFill" size={15} />
              <FillBox><Icon name="cross" size={14} /><DropButton $w={16} aria-label="Заливка фона" /></FillBox>
            </Field>
            <Tool name="frameA" />
            <Tool name="frameText" $w={20} />
          </FrameRow>
          <FrameRow>
            <Spin icon="columns" label="Столбцы" value="1" off w={64} />
            <Tool name="columnText" />
            <Dots $off aria-label="Параметры столбцов">...</Dots>
          </FrameRow>
        </Section>
      </DockerContent>
      <VScroll $w={15}>
        <Space $grow={26} />
        <ScrollButton aria-label="Вверх"><Icon name="up" /></ScrollButton>
        <Space $grow={186} />
        <Thumb $w={13} $grow={280} aria-label="Прокрутка"><Grip $turn /></Thumb>
        <ScrollButton aria-label="Вниз"><Icon name="down" /></ScrollButton>
      </VScroll>
    </DockerBody>
  </Docker>
);

export default function App() {
  return (
    <>
      <GlobalStyle />
      <Screen>
        <Desktop>
          <TitleBar>
            <Logo />
            CorelDRAW X7 (64 бит) - D:\Печати\видеокурс.cdr
            <WindowButtons>
              {["person", "minimize", "restore", "close"].map((n) => (
                <button key={n} aria-label={n}><Icon name={n} size={n === "person" ? 14 : 16} /></button>
              ))}
            </WindowButtons>
          </TitleBar>
          <MenuBar>
            {menus.map(([a, key, b]) => <MenuItem key={a + key + b}>{a}<u>{key}</u>{b}</MenuItem>)}
          </MenuBar>
          <Toolbar>
            {["new", "open", "save", "print"].map((n) => <Tool key={n} name={n} />)}
            <Divider $w={3} />
            {["cut", "copy", "paste"].map((n) => <Tool key={n} name={n} />)}
            <Divider />
            <Tool name="undo" /><Caret aria-label="Отменить список" />
            <Tool name="redo" /><Caret $dim aria-label="Вернуть список" />
            <Divider />
            <Tool name="connect" />
            <Divider />
            <Tool name="import" /><Tool name="export" /><Tool name="publish" />
            <Divider />
            <Combo $w={80}>
              <ComboInput aria-label="Масштаб" defaultValue="600%" />
              <Caret aria-label="Список масштабов" />
            </Combo>
            <Tool name="fullscreen" />
            <Divider />
            <Tool name="ruler" /><Tool name="grid" /><Tool name="guides" $on />
            <Divider />
            <SnapButton>Привязать к</SnapButton><Caret aria-label="Привязать список" />
            <Divider />
            <Tool name="options" /><Tool name="checklist" />
            <Divider />
            <Tool name="launch" /><Caret aria-label="Запуск приложений" />
          </Toolbar>
          <Toolbar $tall>
            <Tool name="origin" $w={29} />
            <FieldStack>
              <PairLabel><span>X:</span><PlainInput defaultValue="107,95 мм" /></PairLabel>
              <PairLabel><span>Y:</span><PlainInput defaultValue="145,785 мм" /></PairLabel>
            </FieldStack>
            <Divider $w={6} />
            <FieldStack>
              <PairLabel><Icon name="width" size={14} /><PlainInput aria-label="Ширина" defaultValue="43,673 мм" /></PairLabel>
              <PairLabel><Icon name="height" size={14} /><PlainInput aria-label="Высота" defaultValue="2,675 мм" /></PairLabel>
            </FieldStack>
            <Tool name="lock" $w={22} />
            <Divider $w={2} />
            <Tool name="rotate" $w={22} />
            <AngleInput $w={46} aria-label="Угол" defaultValue="0,0" />
            <Degree>°</Degree>
            <Divider $w={3} />
            <Tool name="mirrorH" /><Tool name="mirrorV" />
            <Divider />
            <Combo $w={155}>
              <ComboInput $marked aria-label="Шрифт" defaultValue="Arial" />
              <Caret aria-label="Список шрифтов" />
            </Combo>
            <Divider $w={3} />
            <Combo $w={80}>
              <ComboInput aria-label="Кегль" defaultValue="7,188 п." />
              <Caret aria-label="Список размеров" />
            </Combo>
            <Divider />
            <Tool name="boldLetter" /><Tool name="italicLetter" /><Tool name="underLetter" />
            <Divider />
            <Tool name="alignMenu" $flyout />
            <Divider $w={3} />
            <Tool name="bullets" /><Tool name="dropCap" />
            <Divider />
            <Tool name="textMode" $on /><Tool name="editText" />
            <Divider />
            <Tool name="openType" $on />
            <Divider />
            <Tool name="holder" $w={32} />
          </Toolbar>
          <Work>
            <Toolbox>
              {toolbox.map((group, i) => (
                <React.Fragment key={group[0]}>
                  {i > 0 && <ToolboxRule />}
                  {group.map((n) => <Tool key={n} name={n} $on={n === "pick"} $flyout={!withoutFlyout.includes(n)} $w={25} />)}
                </React.Fragment>
              ))}
            </Toolbox>
            <Center>
              <DocTabs>
                <DocTab>Экран приветствия</DocTab>
                <DocTab $active>видеокурс.cdr</DocTab>
                <Tool name="slot" $w={22} />
              </DocTabs>
              <Stage>
                <Canvas>
                  <Stamp>
                    <StampHead>ИП КУДРЯШОВ ИГНАТИЙ ИВАНОВИЧ</StampHead>
                    <StampLine>Г. НАБЕРЕЖНЫЕ ЧЕЛНЫ</StampLine>
                    <StampLine>ИНН 165056986025</StampLine>
                    <StampLine>ОГРН 315165000015809</StampLine>
                  </Stamp>
                  {nodes.map((x) => <Node key={x} style={{ left: x }} />)}
                  {handles.map(([left, top]) => <Handle key={left + "-" + top} style={{ left, top }} />)}
                  <Mark width="8" height="8" viewBox="0 0 8 8" style={{ left: 412, top: 155 }}>
                    <path d="M1 1l6 6M7 1L1 7" stroke="#222" strokeWidth="2" />
                    <path d="M2 2l4 4M6 2L2 6" stroke="#ddd" />
                  </Mark>
                  <Mark width="12" height="20" viewBox="0 0 12 20" style={{ left: 416, top: 202 }}>
                    <path d="M1 0v15l3-3 3 7 3-1-3-7h5z" fill="#000" />
                  </Mark>
                </Canvas>
                <VScroll>
                  <ScrollButton aria-label="Вверх"><Icon name="up" /></ScrollButton>
                  <Space $grow={211} />
                  <Thumb $w={14} $h={16} aria-label="Прокрутка" />
                  <Space $grow={214} />
                  <ScrollButton aria-label="Вниз"><Icon name="down" /></ScrollButton>
                </VScroll>
              </Stage>
              <PageBar>
                <PageButton aria-label="Добавить страницу"><Icon name="addPage" /></PageButton>
                <PageButton aria-label="Первая"><Icon name="first" /></PageButton>
                <PageButton aria-label="Назад"><Icon name="prev" /></PageButton>
                <PageCount>2 из 4</PageCount>
                <PageButton aria-label="Вперёд"><Icon name="next" /></PageButton>
                <PageButton aria-label="Последняя"><Icon name="last" /></PageButton>
                <PageButton aria-label="Новая страница"><Icon name="addPage" /></PageButton>
                <PageTab $w={68}>1: печать</PageTab>
                <PageTab $w={68} $active>2: штамп</PageTab>
                <PageTab $w={91}>3: факсимиле</PageTab>
                <PageTab $w={92}>4: по оттиску</PageTab>
                <SplitDots />
                <HScroll>
                  <PageButton aria-label="Влево"><Icon name="prev" size={14} /></PageButton>
                  <Space $grow={205} />
                  <Thumb $w={44} $h={14} aria-label="Прокрутка"><Grip /></Thumb>
                  <Space $grow={198} />
                  <PageButton aria-label="Вправо"><Icon name="next" size={14} /></PageButton>
                </HScroll>
                <PageButton $w={17} aria-label="Масштаб по странице"><Icon name="zoomFit" size={14} /></PageButton>
              </PageBar>
              <PaletteBar colors={palette} picker="dropperOff" grow />
              <PaletteBar colors={["433284", "1a1a1a", "000000", "ffffff"]} picker="dropper" />
            </Center>
            <TextDocker />
            <SideTabs>
              <SideHead><Icon name="slot" size={14} /></SideHead>
              <SideTab $h={124}><Icon name="star" size={14} />Вставка символа</SideTab>
              <SideTab $h={125} $active><Icon name="textMode" size={14} />Свойства текста</SideTab>
              <SideTab $h={76}><Icon name="outline" size={14} />Контур</SideTab>
              <Tool name="holder" $w={18} />
            </SideTabs>
          </Work>
          <StatusBar>
            <StatusText $w={98}>( 108,355; 143,689 )</StatusText>
            <StatusText $w={45}><Icon name="runBox" /></StatusText>
            <span>Фигурный текст, символов: Arial (Обычный) (ТТТ) вкл. Слой 1</span>
            <FillStatus>
              <Icon name="disc" /><Icon name="fillTool" />
              <FillChip>C:100 M:100 Y:0 K:0</FillChip>
            </FillStatus>
            <StatusRight>
              <Icon name="nib" />
              <Icon name="none" />
              Нет
            </StatusRight>
          </StatusBar>
          <Taskbar>
            <TaskButton $w={50} aria-label="Пуск">
              <svg width="36" height="36" viewBox="0 0 36 36">
                <circle cx="18" cy="18" r="17" fill="#1d4f7c" stroke="#8fb9cf" />
                <path d="M4 13a15 15 0 0 1 28 0c-8 5-20 5-28 0z" fill="#7fb0cf" opacity=".7" />
                <path d="M10 12c3-2 5-2 7-1l-1 7c-3-1-5-1-7 1z" fill="#e8622b" />
                <path d="M18 11c3 2 5 1 8 0l-2 7c-2 1-5 1-7 0z" fill="#8cc63f" />
                <path d="M9 20c2-2 5-2 7-1l-1 7c-3-1-5-1-7 1z" fill="#46a3e0" />
                <path d="M17 19c2 2 5 1 7 0l-1 7c-3 2-5 1-7 0z" fill="#fbc62d" />
              </svg>
            </TaskButton>
            <TaskButton aria-label="Internet Explorer">
              <svg width="32" height="32" viewBox="0 0 32 32" fill="none">
                <path d="M26 21c-2 4-5 6-9 6-6 0-10-4-10-10S11 7 17 7s10 4 9 11H12" stroke="#5d9a9a" strokeWidth="4" />
                <path d="M28 4C24-1 10 6 4 18c-3 7-2 12 4 10" stroke="#45b5dd" strokeWidth="3" />
              </svg>
            </TaskButton>
            <TaskButton $w={56} aria-label="Проводник">
              <svg width="32" height="30" viewBox="0 0 32 30">
                <path d="M2 4h4V2h8v2h14v4h2v19H1z" fill="#e6c873" />
                <path d="M4 8h24v17H4z" fill="#f7e6a8" />
                <path d="M2 11h28v12H2z" fill="#f1d78a" />
                <path d="M6 17h20v12h-5v-7H11v7H6z" fill="#8fc4e4" />
              </svg>
            </TaskButton>
            <TaskButton $tone="linear-gradient(#e0a09c, #c9353a 40%, #b5252e)" aria-label="Opera">
              <svg width="28" height="30" viewBox="0 0 28 30"><ellipse cx="14" cy="15" rx="8" ry="10" fill="none" stroke="#ec4a50" strokeWidth="7" /><ellipse cx="14" cy="15" rx="5" ry="9" fill="none" stroke="#8f1820" /><ellipse cx="14" cy="15" rx="12" ry="13" fill="none" stroke="#8f1820" /></svg>
            </TaskButton>
            <TaskButton $tone="linear-gradient(120deg, #b9cfc1, #2f6a4a 50%)" aria-label="Skype">
              <svg width="28" height="30" viewBox="0 0 28 30"><circle cx="14" cy="15" r="11" fill="#2aa5dc" /><text x="8" y="22" fontFamily="Liberation Sans" fontWeight="700" fontSize="19" fill="#fff">S</text></svg>
            </TaskButton>
            <TaskButton $tone="linear-gradient(#b8ccbe, #8fb09b)" aria-label="CorelDRAW">
              <svg width="30" height="30" viewBox="0 0 30 30"><path d="M0 0h30v30H0z" fill="#5da544" /><path d="M6 0c2 14 10 24 20 28C24 18 18 8 12 0z" fill="#fff" /></svg>
            </TaskButton>
            <TaskButton $tone="linear-gradient(#5b8a6d, #2c6142)" aria-label="Запись экрана">
              <svg width="28" height="28" viewBox="0 0 28 28"><path d="M2 4h24v15H2z" fill="#a8b8c4" /><ellipse cx="14" cy="24" rx="10" ry="3" fill="#245fa5" /></svg>
            </TaskButton>
            <TaskButton $tone="linear-gradient(#5b8a6d, #2c6142)" aria-label="Камера">
              <svg width="28" height="28" viewBox="0 0 28 28"><circle cx="8" cy="17" r="6" fill="#4b4f58" /><path d="M12 12h14v12H12z" fill="#6b6f7d" /></svg>
            </TaskButton>
            <Tray>
              <span>RU</span>
              <svg width="8" height="5" viewBox="0 0 8 5"><path d="M0 5h8L4 1z" fill="#fff" /></svg>
              <svg width="16" height="16" viewBox="0 0 16 16"><circle cx="8" cy="8" r="7.500" fill="#f29a1f" /><circle cx="8" cy="8" r="3.500" fill="none" stroke="#fff" strokeWidth="2" /><path d="M12 5v7" stroke="#fff" strokeWidth="2" /></svg>
              <svg width="14" height="14" viewBox="0 0 14 14"><path d="M1.500 2.500h6v10h-6z" fill="#3a5c49" stroke="#fff" strokeWidth="2" /><path d="M8 1v3M12 1v3M7 4h6v3l-3 2v4" stroke="#fff" strokeWidth="2" fill="none" /></svg>
              <svg width="16" height="14" viewBox="0 0 16 14"><path d="M1 5h2l4-4v12L3 9H1z" fill="#fff" /><path d="M9 5c1 1 1 3 0 4M11 3c2 2 2 6 0 8M13 2c3 3 3 7 0 10" stroke="#dfe9e2" fill="none" /></svg>
              <Clock>22:51<br />24.07.2015</Clock>
            </Tray>
            <ShowDesktop aria-label="Показать рабочий стол" />
          </Taskbar>
        </Desktop>
        <Wallpaper />
        <Notice>
          Создано в пробной версии программы "Экранная Камера"<br />
          В полной версии этой надписи не будет. SCREENCAM.RU
        </Notice>
      </Screen>
    </>
  );
}
